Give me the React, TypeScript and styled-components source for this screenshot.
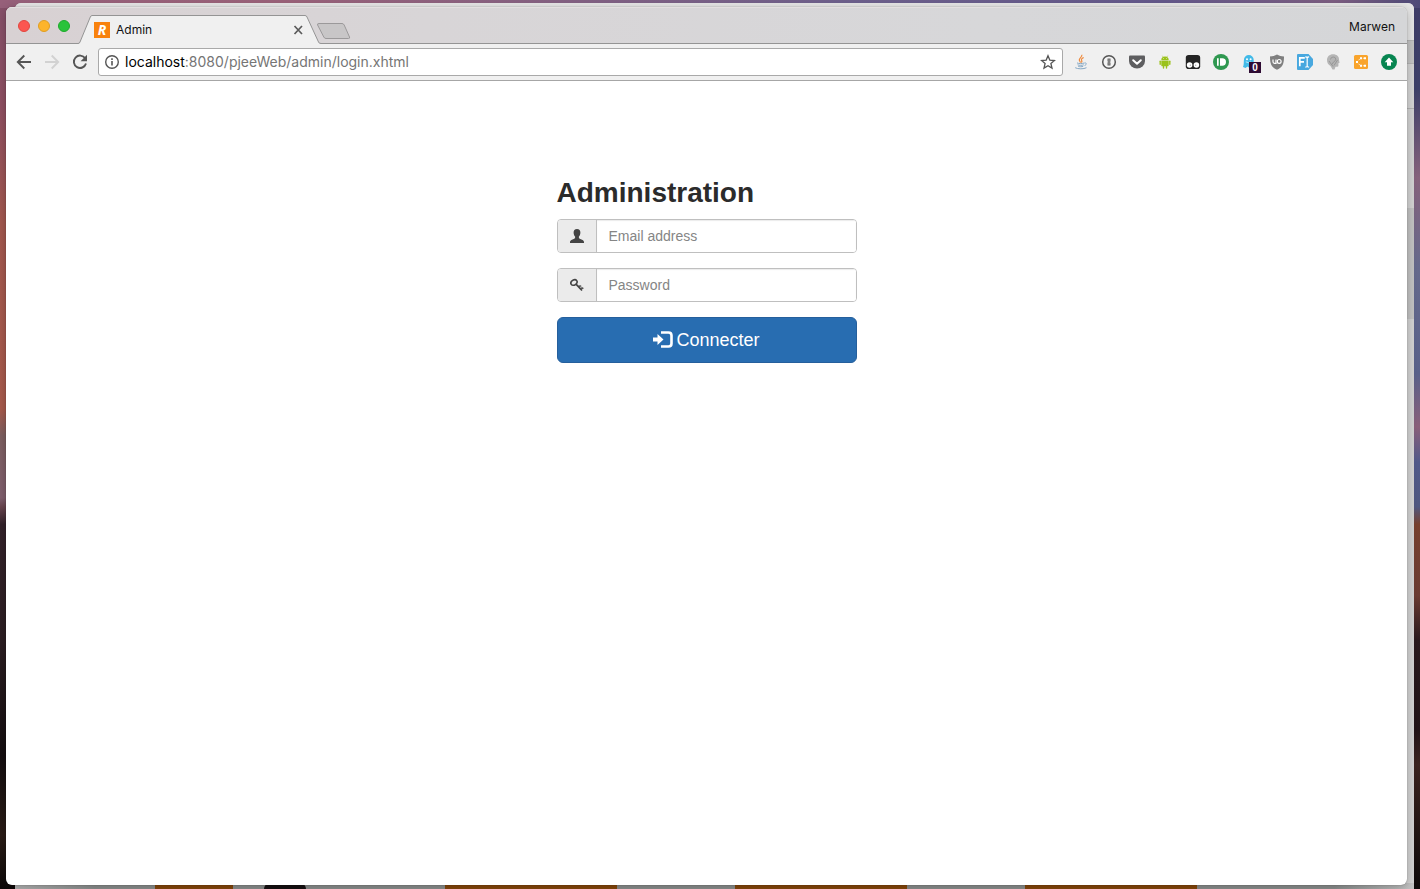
import React from "react";
import styled, { createGlobalStyle } from "styled-components";

const chromeFont = `Inter, Roboto, "Liberation Sans", sans-serif`;
const pageFont = `"Liberation Sans", Arial, sans-serif`;

const GlobalStyle = createGlobalStyle`
  *, *::before, *::after { box-sizing: border-box; }
  body { margin: 0; font-family: ${pageFont}; }
  button, input { font-family: inherit; }
`;

/* ---------- desktop ---------- */

const Desktop = styled.div`
  position: relative;
  display: flex;
  height: 100vh;
  padding: 7px 13px 4px 6px;
  overflow: hidden;
  background:
    linear-gradient(90deg, #96607a 0%, #9a6279 20%, #6d608c 60%, #63588a 82%, #7c5d80 94%, #4e4a78 100%) 0 0 / 100% 8px no-repeat,
    linear-gradient(180deg, #85506a 0%, #8f5062 12%, #a3584f 25%, #a85a4c 46%, #7d5f60 49%, #805f6e 56%, #6a4650 57%, #33222a 59%, #2c1e22 72%, #140e10 85%, #2a1c16 94%, #0d0808 100%) 0 0 / 50% 100% no-repeat,
    linear-gradient(180deg, #3f3d68 0%, #3d4068 10%, #86627c 20%, #666a8c 30%, #59618a 42%, #8a607a 48%, #515a8a 52%, #505880 57%, #77412f 59%, #6b3c33 67%, #2a1a1e 72%, #221418 82%, #3b2420 86%, #0e0a0a 100%) 100% 0 / 50% 100% no-repeat;
`;

const BackWindow = styled.div`
  position: absolute;
  inset: 3px 6px 0 15px;
  display: flex;
  flex-direction: column;
  border-radius: 6px 6px 0 0;
  overflow: hidden;
  background: #d2d2d2;
`;

const BackBand = styled.div<{ $height: number; $color: string; $line?: boolean }>`
  flex: none;
  height: ${(p) => p.$height}px;
  background: ${(p) => p.$color};
  border-bottom: ${(p) => (p.$line ? "1px solid #b4b4b4" : "0")};
`;

const BackFooter = styled.div`
  display: flex;
  gap: 118px;
  height: 6px;
  margin-top: auto;
  padding-left: 140px;
  background: linear-gradient(90deg, #b4b4b4 0, #8c8f8e 80px, #8c8f8e calc(100% - 80px), #c4c4c4 100%);
`;

const BackCard = styled.div<{ $width: number }>`
  width: ${(p) => p.$width}px;
  background: #86460a;
`;

const BackPhoto = styled.div`
  width: 42px;
  margin: 0 21px 0 -87px;
  border-radius: 12px 12px 0 0;
  background: #161011;
`;

/* ---------- browser window ---------- */

const BrowserWindow = styled.div`
  position: relative;
  display: flex;
  flex: 1;
  flex-direction: column;
  min-width: 0;
  border-radius: 6px;
  overflow: hidden;
  background: #fff;
  box-shadow: 0 0 1px rgba(0, 0, 0, 0.45), 0 2px 10px rgba(0, 0, 0, 0.25);
`;

const TabStrip = styled.header`
  display: flex;
  align-items: center;
  height: 37px;
  padding: 0 12px;
  background: linear-gradient(90deg, #d8d1d3, #d8d5d7 30%, #d7d7d9 70%, #d5d6d8);
  box-shadow: inset 0 -1px #949494, inset 0 1px #e3dfe0;
`;

const WindowControls = styled.div`
  display: flex;
  gap: 8px;
  margin-right: 8px;
`;

const WindowControl = styled.button<{ $color: string; $edge: string }>`
  width: 12px;
  height: 12px;
  padding: 0;
  border: 1px solid ${(p) => p.$edge};
  border-radius: 50%;
  background: ${(p) => p.$color};
`;

const Tab = styled.div`
  position: relative;
  display: flex;
  align-items: center;
  align-self: flex-end;
  gap: 6px;
  width: 243px;
  height: 29px;
  padding: 0 15px 0 16px;
`;

const TabOutline = styled.svg`
  position: absolute;
  inset: 0;
`;

const Favicon = styled.span`
  position: relative;
  width: 16px;
  height: 16px;
  background: #f8820d;
  color: #fff;
  font: italic bold 14px/16px "Open Sans", sans-serif;
  text-align: center;
`;

const TabTitle = styled.span`
  position: relative;
  flex: 1;
  color: #111;
  font: 12px/16px ${chromeFont};
`;

const IconButton = styled.button`
  position: relative;
  display: flex;
  flex: none;
  width: 16px;
  height: 16px;
  padding: 0;
  border: 0;
  background: none;
`;

const NewTab = styled.button`
  display: flex;
  margin: 10px 0 0 -5px;
  align-self: flex-start;
  margin-top: 15px;
  padding: 0;
  border: 0;
  background: none;
`;

const Profile = styled.button`
  margin: 2px 0 0 auto;
  padding: 0;
  border: 0;
  background: none;
  color: #111;
  font: 12px/16px ${chromeFont};
`;

const Toolbar = styled.nav`
  display: flex;
  align-items: center;
  gap: 10px;
  height: 37px;
  padding: 0 10px;
  border-bottom: 1px solid #a6a6a6;
  background: #f0f0f0;
`;

const ToolGroup = styled.div`
  display: flex;
  flex: none;
  gap: 12px;
`;

const AddressBar = styled.div`
  display: flex;
  flex: 1;
  align-items: center;
  gap: 5px;
  min-width: 0;
  height: 28px;
  padding: 0 6px 0 5px;
  border: 1px solid #a9a9a9;
  border-radius: 3px;
  background: #fff;
`;

const Url = styled.a`
  flex: 1;
  overflow: hidden;
  color: #757575;
  font: 14px/20px ${chromeFont};
  text-decoration: none;
  white-space: nowrap;
`;

const Host = styled.span`
  color: #000;
`;

const Badge = styled.span`
  position: absolute;
  top: 8px;
  left: 8px;
  width: 12px;
  height: 11px;
  background: #2e0b33;
  color: #fff;
  font: bold 10px/11px ${pageFont};
  text-align: center;
`;

/* ---------- page ---------- */

const Page = styled.main`
  flex: 1;
  padding: 95px 15px 0;
`;

const LoginForm = styled.form`
  display: flex;
  flex-direction: column;
  gap: 15px;
  max-width: 300px;
  margin: 0 auto;
`;

const Heading = styled.h1`
  margin: 0 0 -5px;
  color: #2b2b2b;
  font: bold 28px/33px ${pageFont};
`;

const InputGroup = styled.div`
  display: flex;
  height: 34px;
  border: 1px solid #bfbfbf;
  border-radius: 4px;
  overflow: hidden;
`;

const Addon = styled.label`
  display: flex;
  flex: none;
  align-items: center;
  justify-content: center;
  width: 39px;
  border-right: 1px solid #bfbfbf;
  background: #ebebeb;
`;

const Field = styled.input`
  flex: 1;
  min-width: 0;
  padding: 0 12px;
  border: 0;
  outline: 0;
  background: #fff;
  box-shadow: inset 0 1px 1px rgba(0, 0, 0, 0.08);
  color: #555;
  font-size: 14px;
  line-height: 20px;
  &::placeholder { color: #858585; opacity: 1; }
`;

const Submit = styled.button`
  display: flex;
  align-items: center;
  justify-content: center;
  gap: 3px;
  height: 46px;
  border: 1px solid #255f9c;
  border-radius: 6px;
  background: #286db1;
  color: #fff;
  font-size: 18px;
  line-height: 24px;
`;

/* ---------- drawings ---------- */

const Glyph = ({ children, size = 16 }: { children: React.ReactNode; size?: number }) => (
  <svg width={size} height={size} viewBox={`0 0 ${size} ${size}`} fill="none" aria-hidden="true">
    {children}
  </svg>
);

const extensions: { name: string; badge?: string; art: React.ReactNode }[] = [
  {
    name: "Java",
    art: (
      <>
        <path d="M8.800 .8C9.600 3 5.800 4 6.300 6.100c.2.900 1 1.500 1.200 2.600M10.700 3.500C8.500 4.500 8 5.400 8.700 6.500c.5.900.2 1.400-.4 2" stroke="#ee8a3d" strokeWidth="1.200" />
        <path d="M4 8.900c1.500.9 5.400.8 7.300.1M4.600 10.800c1.700.7 4.400.7 6.100 0M5.200 12.300c1.500.6 3.600.6 5 0M2.200 13.700c2.400 1.500 8.700 1.500 11.300 0M11.500 9c2.500-.5 2.300 1.800.1 2.500" stroke="#86a8c4" strokeWidth="1" />
      </>
    ),
  },
  {
    name: "1Password",
    art: (
      <>
        <circle cx="8" cy="8" r="6.300" stroke="#555" strokeWidth="1.500" fill="#f4f4f4" />
        <path d="M6.500 4.500h3v3l-.6.600.6.600v2.800h-3v-3l.6-.6-.6-.6z" fill="#666" />
        <path d="M8 5.300v5.400" stroke="#aaa" strokeWidth=".8" />
      </>
    ),
  },
  {
    name: "Pocket",
    art: (
      <>
        <path d="M0 2.500q0-1 1-1h14q1 0 1 1v4.500a8 7.500 0 0 1-16 0z" fill="#5e5e60" />
        <path d="M4.200 6.200L8 9.700l3.800-3.500" stroke="#fff" strokeWidth="2" strokeLinecap="round" strokeLinejoin="round" />
      </>
    ),
  },
  {
    name: "Android",
    art: (
      <g fill="#9bc21b">
        <path d="M4.300 6a3.700 3.500 0 0 1 7.400 0z" />
        <path d="M4.300 6.600h7.400v5q0 .7-.7.700h-.8v1.600q0 .8-.7.800t-.7-.8v-1.600H7.200v1.600q0 .8-.7.800t-.7-.8v-1.600H5q-.7 0-.7-.7z" />
        <rect x="2.500" y="6.500" width="1.400" height="4.400" rx=".7" />
        <rect x="12.100" y="6.500" width="1.400" height="4.400" rx=".7" />
        <path d="M5.300 1.700l1 1.600M10.700 1.700l-1 1.600" stroke="#9bc21b" strokeWidth=".5" />
        <circle cx="6.500" cy="4.500" r=".4" fill="#fff" />
        <circle cx="9.500" cy="4.500" r=".4" fill="#fff" />
      </g>
    ),
  },
  {
    name: "Tampermonkey",
    art: (
      <>
        <rect x=".8" y="1" width="14.400" height="14" rx="2.800" fill="#242424" />
        <circle cx="4.600" cy="11" r="2.800" fill="#fff" />
        <circle cx="11.400" cy="11" r="2.800" fill="#fff" />
        <circle cx="5.300" cy="11.200" r=".6" fill="#999" />
        <circle cx="10.700" cy="11.200" r=".6" fill="#999" />
      </>
    ),
  },
  {
    name: "Pushbullet",
    art: (
      <>
        <circle cx="8" cy="8" r="8" fill="#2f9850" />
        <path d="M4 4.300h1.700v7.400H4zM7 4.300h2.300a3.700 3.700 0 0 1 0 7.400H7z" fill="#fff" />
      </>
    ),
  },
  {
    name: "Ghostery",
    badge: "0",
    art: (
      <>
        <path d="M2 13c1-2.500.7-4.500.9-7a4.900 4.900 0 0 1 9.800 0v7.500l-2.200-1-2 1.500-2-1.500-2 1.500z" fill="#42bae8" />
        <circle cx="6" cy="5.200" r="1" fill="#fff" />
        <circle cx="9.600" cy="5.200" r="1" fill="#fff" />
        <path d="M4.800 7.800q2.700 1.800 5.300 0" stroke="#dff4fc" strokeWidth=".8" />
      </>
    ),
  },
  {
    name: "uBlock Origin",
    art: (
      <>
        <path d="M8 .5c2 1.300 4.500 1.900 7 1.900 0 7-1 10.400-7 13.400C2 12.800 1 9.400 1 2.400c2.500 0 5-.6 7-1.900z" fill="#7f7f7f" />
        <path d="M4 5.500v2.300q0 1.500 1.500 1.500H7V5.500" stroke="#fff" strokeWidth="1.200" />
        <circle cx="10.200" cy="7.400" r="1.900" stroke="#fff" strokeWidth="1.200" />
      </>
    ),
  },
  {
    name: "Font inspector",
    art: (
      <>
        <path d="M1 0h10.500L16 5v6l-4.500 5H1q-1 0-1-1V1q0-1 1-1z" fill="#48a8df" />
        <path d="M2.800 12.300V3.900h5M2.800 7.900h4.200" stroke="#fff" strokeWidth="1.700" />
        <path d="M8.300 2.800q1.700 0 1.900 1v8.400q-.2 1-1.900 1M12.100 2.800q-1.700 0-1.900 1M10.200 12.200q.2 1 1.900 1" stroke="#fff" strokeWidth="1.200" />
      </>
    ),
  },
  {
    name: "Assistant",
    art: (
      <>
        <path d="M8 .3c3.800 0 6 2.200 6 5.200 0 1 .3 2 .6 3.200l-1.200.6v2.400q0 1-1.200 1H10.500L9.500 15.500H7.500L5.500 12C3 10.500 2 8.500 2 6 2 2.700 4.500.3 8 .3z" fill="#b5b5b5" />
        <path d="M5.500 5.500q.3-2.500 2.700-2.500t2.600 2.200Q10.800 7 8.500 8L7 10.500M4 7l4 5.500M12.500 6L9 11.500" stroke="#979797" />
      </>
    ),
  },
  {
    name: "Sitemap",
    art: (
      <>
        <rect x="1" y="1" width="14" height="14" rx="1.500" fill="#f9a42c" />
        <path d="M4 8l3.500-3.800H12M4 8l3.500 3.800H12" stroke="#fff" strokeWidth=".8" strokeDasharray="1.500 1" />
        <path d="M3 7h2v2H3zM7 3.200h2v2H7zM11 3.200h2v2h-2zM7 10.800h2v2H7zM11 10.800h2v2h-2z" fill="#fff" />
      </>
    ),
  },
  {
    name: "Upload",
    art: (
      <>
        <circle cx="8" cy="8" r="8" fill="#078550" />
        <path d="M8 3.600l4.300 4.600H10v3.600H6V8.200H3.700z" fill="#fff" />
      </>
    ),
  },
];

export default function App() {
  return (
    <Desktop>
      <GlobalStyle />
      <BackWindow aria-hidden="true">
        <BackBand $height={38} $color="#e6e6e6" $line />
        <BackBand $height={23} $color="#c3c3c3" $line />
        <BackBand $height={45} $color="#d4d4d4" $line />
        <BackBand $height={99} $color="#d2d2d2" />
        <BackBand $height={111} $color="#c2c2c2" />
        <BackFooter>
          <BackCard $width={78} />
          <BackPhoto />
          <BackCard $width={172} />
          <BackCard $width={172} />
          <BackCard $width={172} />
        </BackFooter>
      </BackWindow>

      <BrowserWindow>
        <TabStrip>
          <WindowControls>
            <WindowControl aria-label="Close window" $color="#fc5650" $edge="#e2463f" />
            <WindowControl aria-label="Minimize window" $color="#fdb42b" $edge="#e09e21" />
            <WindowControl aria-label="Zoom window" $color="#2ac33b" $edge="#1dab2b" />
          </WindowControls>
          <Tab>
            <TabOutline width="243" height="29" viewBox="0 0 243 29" aria-hidden="true">
              <path d="M0 29v-.5q1.500 0 2-1.500L12.300 2Q13 .5 14 .5h213q1.500 0 2 1.500l11.500 25q.5 1.500 2.500 1.500v.5z" fill="#f0f0f0" />
              <path d="M0 28.500q1.500 0 2-1.500L12.300 2Q13 .5 14 .5h213q1.500 0 2 1.500l11.500 25q.5 1.500 2.500 1.500" fill="none" stroke="#949494" />
            </TabOutline>
            <Favicon>R</Favicon>
            <TabTitle>Admin</TabTitle>
            <IconButton aria-label="Close tab">
              <Glyph>
                <path d="M4.500 4l7.500 8M12 4l-7.500 8" stroke="#5a5a5a" strokeWidth="1.700" />
              </Glyph>
            </IconButton>
          </Tab>
          <NewTab aria-label="New tab">
            <svg width="35" height="18" viewBox="0 0 35 18" aria-hidden="true">
              <path d="M3 1.500h23q1.500 0 2.200 1.500l5.300 12q.6 1.500-1 1.500H10q-1.500 0-2.200-1.500L1.600 3Q1 1.500 3 1.500z" fill="#c8c6c7" stroke="#9b999a" />
            </svg>
          </NewTab>
          <Profile>Marwen</Profile>
        </TabStrip>

        <Toolbar>
          <ToolGroup>
            <IconButton aria-label="Back">
              <Glyph>
                <path d="M15 8H2M8.300 1.500L1.800 8l6.500 6.500" stroke="#555" strokeWidth="1.900" />
              </Glyph>
            </IconButton>
            <IconButton aria-label="Forward">
              <Glyph>
                <path d="M1 8h13M7.700 1.500L14.200 8l-6.500 6.500" stroke="#d2d2d2" strokeWidth="1.900" />
              </Glyph>
            </IconButton>
            <IconButton aria-label="Reload">
              <Glyph>
                <path d="M13.200 4.300A6.200 6.200 0 1 0 14 9.500" stroke="#555" strokeWidth="1.900" />
                <path d="M15 .8v6.400H8.600z" fill="#555" />
              </Glyph>
            </IconButton>
          </ToolGroup>
          <AddressBar>
            <IconButton aria-label="Page information">
              <Glyph>
                <circle cx="8" cy="8" r="6.300" stroke="#555" strokeWidth="1.400" />
                <path d="M8 4.200v1.700M8 7v4.600" stroke="#555" strokeWidth="1.600" />
              </Glyph>
            </IconButton>
            <Url href="#">
              <Host>localhost</Host>:8080/pjeeWeb/admin/login.xhtml
            </Url>
            <IconButton aria-label="Bookmark this page">
              <Glyph>
                <path d="M8 1.800l1.800 4.300 4.700.4-3.600 3 1.100 4.600L8 11.700l-4 2.400 1.100-4.600-3.600-3 4.700-.4z" stroke="#555" strokeWidth="1.300" />
              </Glyph>
            </IconButton>
          </AddressBar>
          <ToolGroup>
            {extensions.map((e) => (
              <IconButton key={e.name} aria-label={e.name}>
                <Glyph>{e.art}</Glyph>
                {e.badge && <Badge>{e.badge}</Badge>}
              </IconButton>
            ))}
          </ToolGroup>
        </Toolbar>

        <Page>
          <LoginForm onSubmit={(e) => e.preventDefault()}>
            <Heading>Administration</Heading>
            <InputGroup>
              <Addon htmlFor="email" aria-label="Email address">
                <Glyph size={14}>
                  <path d="M7 0c2.300 0 3.500 1.500 3.400 3.700-.1 1.700-.7 3-1.500 3.900v1.200c0 .5.300.8.900 1l2.800 1.200c.9.400 1.400 1.200 1.400 2.500v.5H0v-.5c0-1.300.5-2.100 1.400-2.500l2.800-1.200c.6-.2.900-.5.900-1V7.600C4.300 6.700 3.700 5.400 3.600 3.700 3.500 1.500 4.700 0 7 0z" fill="#444" />
                </Glyph>
              </Addon>
              <Field id="email" type="email" placeholder="Email address" />
            </InputGroup>
            <InputGroup>
              <Addon htmlFor="password" aria-label="Password">
                <Glyph size={14}>
                  <ellipse cx="4" cy="4.500" rx="3.300" ry="2.500" transform="rotate(-35 4 4.500)" stroke="#444" strokeWidth="1.600" />
                  <path d="M6 6.200l6 6.300" stroke="#444" strokeWidth="1.700" />
                  <path d="M8.500 8.300q2-.8 2.600.2M10.500 10.500q1.800-1.200 2.800.2" stroke="#444" strokeWidth="1.400" />
                </Glyph>
              </Addon>
              <Field id="password" type="password" placeholder="Password" />
            </InputGroup>
            <Submit type="submit">
              <svg width="20" height="18" viewBox="0 0 20 18" aria-hidden="true">
                <path d="M0 6.500h4.500V3l6 5.500-6 5.500v-3.500H0z" fill="#fff" />
                <path d="M8 1.500h7.500q3 0 3 3v8q0 3-3 3H8" fill="none" stroke="#fff" strokeWidth="2.600" />
              </svg>
              Connecter
            </Submit>
          </LoginForm>
        </Page>
      </BrowserWindow>
    </Desktop>
  );
}
